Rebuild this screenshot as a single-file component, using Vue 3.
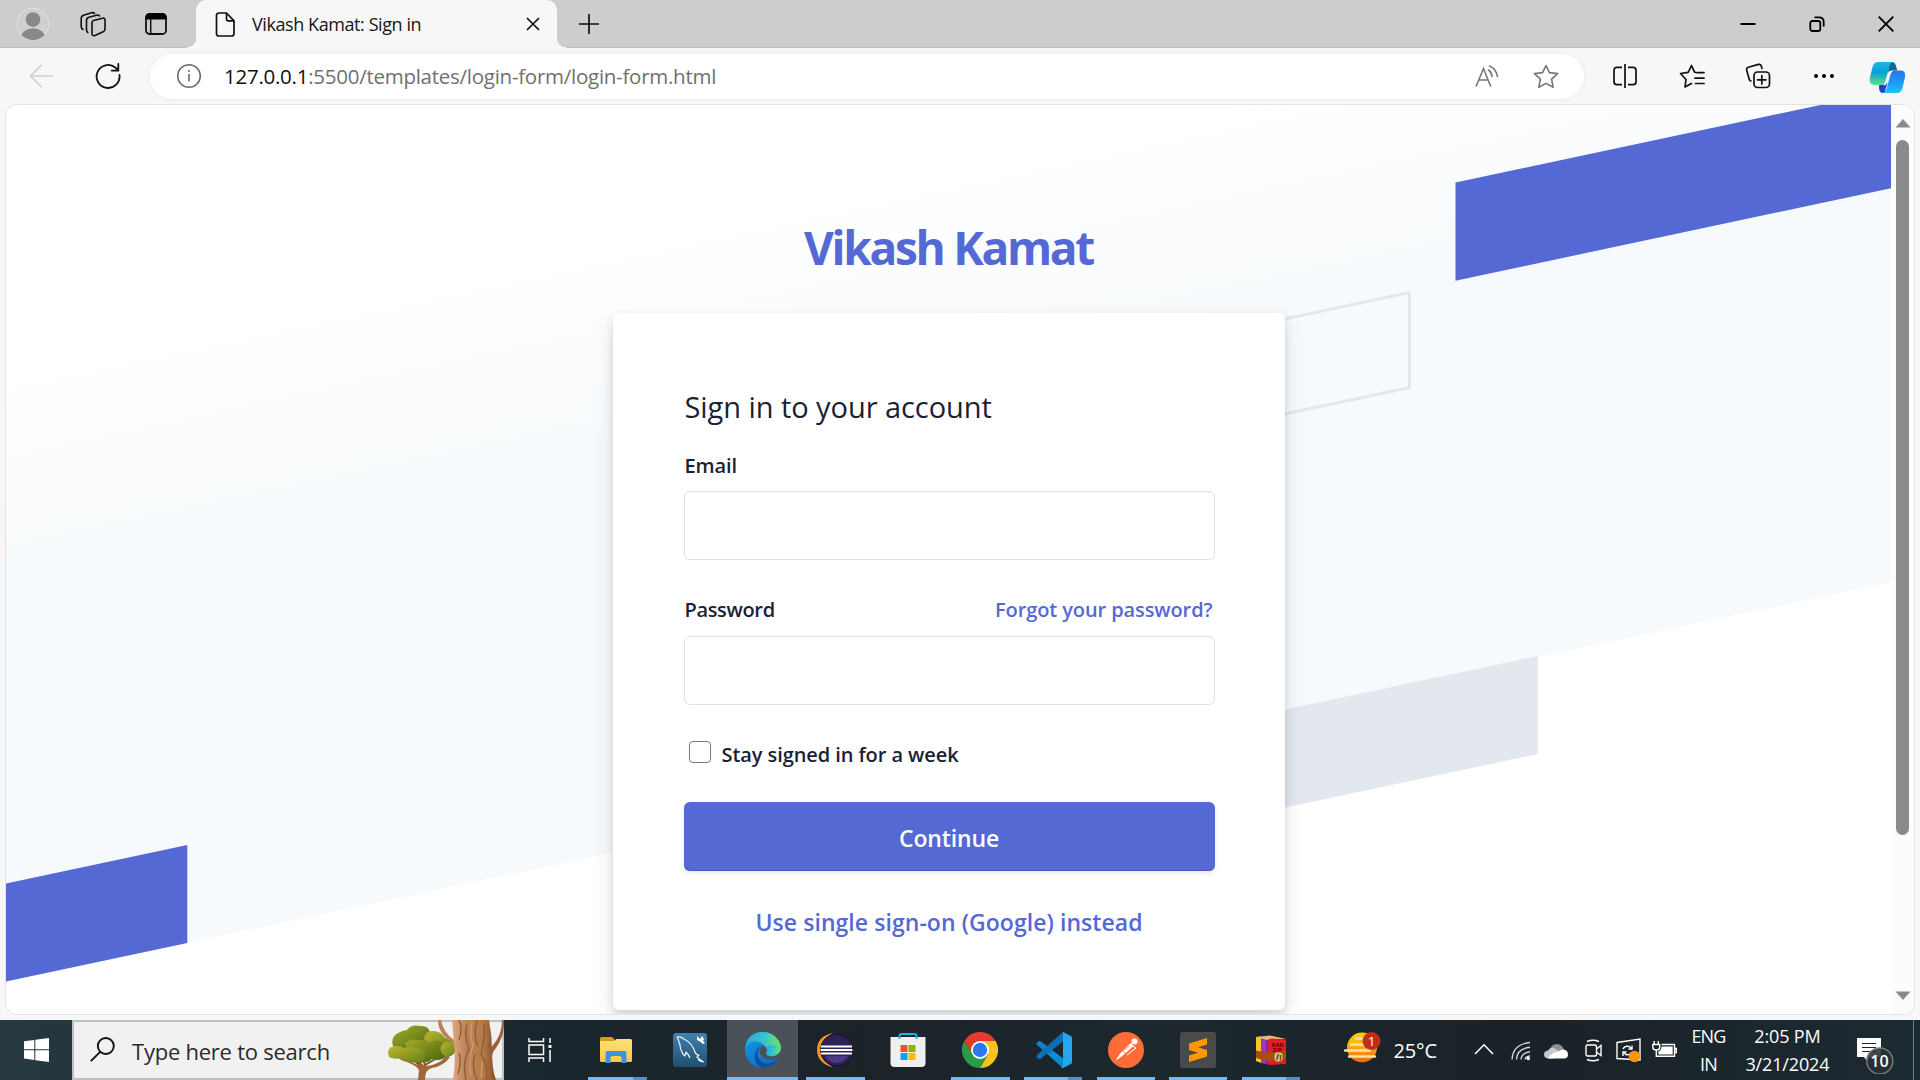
<script setup>
const apps = [
  { id: 'explorer', main: 45, extra: 14 },
  { id: 'mysql' },
  { id: 'edge', main: 71, active: true },
  { id: 'eclipse', main: 59 },
  { id: 'store' },
  { id: 'chrome', main: 59 },
  { id: 'vscode', main: 44, extra: 14 },
  { id: 'postman', main: 58 },
  { id: 'sublime', main: 58 },
  { id: 'winrar', main: 44, extra: 14 },
]
</script>

<template>
  <div class="screen">
    <!-- Tab strip -->
    <header class="tabs">
      <svg class="avatar" width="34" height="34" viewBox="0 0 34 34">
        <circle cx="17" cy="17" r="16" fill="#d2d0ce" stroke="#e4e2de" />
        <clipPath id="av"><circle cx="17" cy="17" r="16" /></clipPath>
        <g fill="#8a8886" clip-path="url(#av)">
          <ellipse cx="17" cy="12.600" rx="7.300" ry="7.400" />
          <ellipse cx="17" cy="31" rx="12.200" ry="9.700" />
        </g>
      </svg>
      <svg class="workspaces" width="26" height="26" viewBox="0 0 26 26" fill="none" stroke="#111" stroke-width="1.600" stroke-linejoin="round" stroke-linecap="round">
        <path d="M13.500 9.500 22.500 7.200Q25 6.700 25 9V18Q25 20 23.200 20.800L15 24.500Q12 25.400 12 22.500V12Q12 10 13.500 9.500Z" />
        <path d="M7.800 21.500Q6.500 20.500 6.500 18.800V9.500Q6.500 7 9 6.300L16.500 4.200Q18.500 3.700 19.500 5" />
        <path d="M3 18.500Q1.200 17.600 1.200 15.500V7.500Q1.200 5 3.500 4.200L11.500 1.800Q13.500 1.300 14.500 2.500" />
      </svg>
      <svg class="tabactions" width="22" height="22" viewBox="0 0 22 22">
        <rect x="1" y="1" width="20" height="20" rx="3.500" fill="none" stroke="#111" stroke-width="1.800" />
        <path d="M.500 6.500V4Q.500.500 4 .500H18Q21.500.500 21.500 4V6.500Z" fill="#000" />
        <path d="M5.700 6V21" stroke="#111" stroke-width="1.500" />
      </svg>
      <div class="tab">
        <i class="flare left"></i><i class="flare right"></i>
        <svg width="20" height="25" viewBox="0 0 20 25" fill="none" stroke="#111" stroke-width="1.700" stroke-linejoin="round">
          <path d="M4 1H11.500L19 8.800V21.500Q19 24 16.500 24H4Q1.500 24 1.500 21.500V3.500Q1.500 1 4 1Z" />
          <path d="M11.500 1V7Q11.500 8.800 13.300 8.800H19" />
        </svg>
        <span class="tabtitle">Vikash Kamat: Sign in</span>
        <svg class="tabclose" width="14" height="14" viewBox="0 0 14 14" stroke="#111" stroke-width="1.700"><path d="M1 1 13 13M13 1 1 13" /></svg>
      </div>
      <svg class="newtab" width="22" height="22" viewBox="0 0 22 22" stroke="#111" stroke-width="1.700"><path d="M11 1V21M1 11H21" /></svg>
      <div class="controls">
        <svg width="16" height="16" viewBox="0 0 16 16"><path d="M.500 8H15.500" stroke="#000" stroke-width="2" /></svg>
        <svg width="16" height="16" viewBox="0 0 16 16" fill="none" stroke="#000" stroke-width="1.800">
          <rect x="1.300" y="5" width="10" height="10" rx="2" /><path d="M5.500 1.400H10Q14.700 1.400 14.700 6V10.500" />
        </svg>
        <svg width="16" height="16" viewBox="0 0 16 16" stroke="#000" stroke-width="1.900"><path d="M.700.700 15.300 15.300M15.300.700.700 15.300" /></svg>
      </div>
    </header>

    <!-- Toolbar -->
    <nav class="toolbar">
      <svg class="back" width="25" height="24" viewBox="0 0 25 24" fill="none" stroke="#cfcfcf" stroke-width="1.600"><path d="M12.500 1 1.500 12 12.500 23M1.500 12H24" /></svg>
      <svg class="reload" width="26" height="26" viewBox="0 0 26 26" fill="none" stroke="#111" stroke-width="1.800" stroke-linecap="round"><path d="M24.500 12A11.500 11.500 0 1 1 20.500 4.700L23 7.200M23.300 1V7.600H16.700" /></svg>
      <div class="address">
        <svg width="26" height="26" viewBox="0 0 26 26" fill="none" stroke="#6e6e6e" stroke-width="1.600"><circle cx="13" cy="13" r="11.300" /><path d="M13 11V18.500M13 7V9" /></svg>
        <span class="url"><b>127.0.0.1</b>:5500/templates/login-form/login-form.html</span>
        <svg class="aloud" width="24" height="22" viewBox="0 0 24 22" fill="none" stroke="#777" stroke-width="1.600" stroke-linecap="round">
          <path d="M1.200 21 8.500 3.500 15.500 21M3.700 15H13.200M13.500 5Q16.500 7 17 11.500M14.500 1Q21 3.500 22.500 11.500" />
        </svg>
        <svg class="star" width="26" height="25" viewBox="0 0 26 25" fill="none" stroke="#777" stroke-width="1.600" stroke-linejoin="round"><path d="M13 1.500 16.400 8.600 24.600 9.600 18.600 15.200 20.200 23.300 13 19.400 5.800 23.300 7.400 15.200 1.400 9.600 9.600 8.600Z" /></svg>
      </div>
      <svg class="split" width="24" height="24" viewBox="0 0 24 24" fill="none" stroke="#111" stroke-width="1.700"><path d="M12 0V24M9 3.300H4Q1 3.300 1 6.300V17.700Q1 20.700 4 20.700H9M15 3.300H20Q23 3.300 23 6.300V17.700Q23 20.700 20 20.700H15" /></svg>
      <svg class="favs" width="26" height="25" viewBox="0 0 26 25" fill="none" stroke="#111" stroke-width="1.700" stroke-linejoin="round" stroke-linecap="round"><path d="M17 8.500 15.500 8.200 12.500 1.500 9.200 8.300 1.500 9.500 7 15.500 6 23 12.500 19.500M18.500 8.700H25M16 14.200H25M16.500 19.500H25" /></svg>
      <svg class="collect" width="26" height="26" viewBox="0 0 26 26" fill="none" stroke="#111" stroke-width="1.700" stroke-linecap="round">
        <rect x="9" y="9" width="15.500" height="15.500" rx="3.500" /><path d="M16.800 12.500V21M12.500 16.800H21M17 5.500 16.300 3Q15.600.900 13.400 1.400L3.400 4.300Q1.200 5 1.700 7.200L4.200 16.300Q4.700 18 6 18" />
      </svg>
      <svg class="more" width="22" height="6" viewBox="0 0 22 6"><circle cx="3" cy="3" r="2" /><circle cx="11" cy="3" r="2" /><circle cx="19" cy="3" r="2" /></svg>
      <svg class="copilot" width="37" height="33" viewBox="0 0 37 33">
        <defs>
          <linearGradient id="cp1" x1="0" y1="0" x2="0" y2="1"><stop offset="0" stop-color="#18b8e8" /><stop offset=".45" stop-color="#0a9fd8" /><stop offset="1" stop-color="#5ee28c" /></linearGradient>
          <linearGradient id="cp2" x1="0" y1="0" x2="0" y2="1"><stop offset="0" stop-color="#2a74e0" /><stop offset=".6" stop-color="#1aa0f8" /><stop offset="1" stop-color="#17c8f4" /></linearGradient>
        </defs>
        <path d="M20 1H23Q26 1 27 5L28.300 9.500H23Q20 9.500 19 13Z" fill="#0a6a94" />
        <path d="M10 23.500H15.500Q18 23.500 19 20L15.500 32H14Q11 32 10.200 28.500Z" fill="#1745cc" />
        <path d="M9 1H24Q21.500 1.500 20.500 5L16.500 20Q15.500 24 12 24H5Q0 24 .800 17L3.500 6Q5 1 9 1Z" fill="url(#cp1)" />
        <path d="M28 32H13.500Q16.500 31.500 17.500 28L21.500 13.500Q22.700 9.500 26 9.500H32Q37 9.500 36 16L33.500 27Q32 32 28 32Z" fill="url(#cp2)" />
        <path d="M20 10.500H22.500Q20.500 11.500 19.800 14L17 23Q16.300 24.500 14.500 24.500 16.500 22.500 17 20Z" fill="#fff" />
      </svg>
    </nav>

    <!-- Page -->
    <div class="frame">
      <div class="page">
        <svg class="backdrop" width="1885" height="909" viewBox="6 105 1885 909">
          <defs>
            <linearGradient id="bg" gradientUnits="userSpaceOnUse" x1="1270" y1="100" x2="1311.300" y2="294"><stop offset="0" stop-color="#fff" /><stop offset="1" stop-color="#f7fafc" /></linearGradient>
          </defs>
          <path d="M6 105H1891V582L6 981Z" fill="url(#bg)" />
          <path d="M1455.500 182.500 1891 90V188.300L1455.500 280.700Z" fill="#5469d4" />
          <path d="M1200 337 1409.500 292.500V387.500L1200 432Z" fill="none" stroke="#e3e8ee" stroke-width="3" />
          <path d="M1200 727.700 1538 656V754L1200 825.700Z" fill="#e3e8ee" />
          <path d="M6 883.500 187.300 845V943L6 981.500Z" fill="#5469d4" />
        </svg>
        <main class="content">
          <h1>Vikash Kamat</h1>
          <form class="card" @submit.prevent>
            <h2>Sign in to your account</h2>
            <div class="row first"><label for="email">Email</label></div>
            <input id="email" class="field" type="email" />
            <div class="row second"><label for="pw">Password</label><a class="forgot">Forgot your password?</a></div>
            <input id="pw" class="field" type="password" />
            <label class="stay"><span class="box"></span>Stay signed in for a week</label>
            <button class="go" type="submit">Continue</button>
            <a class="sso">Use single sign-on (Google) instead</a>
          </form>
        </main>
      </div>
      <div class="scroll">
        <svg width="16" height="9" viewBox="0 0 16 9"><path d="M8 0 15.500 8.500H.500Z" fill="#8a8a8a" /></svg>
        <div class="thumb"></div>
        <svg class="down" width="16" height="9" viewBox="0 0 16 9"><path d="M8 9 15.500.500H.500Z" fill="#8a8a8a" /></svg>
      </div>
    </div>

    <!-- Taskbar -->
    <footer class="taskbar">
      <div class="start">
        <svg width="25" height="24" viewBox="0 0 25 24" fill="#fff"><path d="M0 3.300 10.300 1.900V11.300H0ZM11.300 1.700 25 0V11.300H11.300ZM0 12.300H10.300V22L0 20.600ZM11.300 12.300H25V24L11.300 22.200Z" /></svg>
      </div>
      <div class="search">
        <svg class="mag" width="25" height="25" viewBox="0 0 25 25" fill="none" stroke="#111" stroke-width="1.900"><circle cx="15.800" cy="9" r="8" /><path d="M10.200 14.800.800 24.200" /></svg>
        <span>Type here to search</span>
        <svg class="tree" width="122" height="60" viewBox="0 0 122 60">
          <defs>
            <linearGradient id="tr" x1="0" y1="0" x2="1" y2="0"><stop offset="0" stop-color="#e0aa82" /><stop offset=".3" stop-color="#bd8458" /><stop offset=".7" stop-color="#b57a48" /><stop offset="1" stop-color="#845028" /></linearGradient>
            <linearGradient id="lf" x1="0" y1="0" x2="1" y2="1"><stop offset="0" stop-color="#a3ac28" /><stop offset=".5" stop-color="#71851a" /><stop offset="1" stop-color="#3f6010" /></linearGradient>
            <linearGradient id="lf2" x1="0" y1="0" x2="1" y2="1"><stop offset="0" stop-color="#bcb730" /><stop offset="1" stop-color="#668018" /></linearGradient>
          </defs>
          <path d="M31 60 32 50Q30 46 20 42 12 40 10 36L14 38Q23 41 31 45L26 40 34 43 38 46Q46 46 54 41L60 35 63 37Q57 46 45 48 38 49 38 60Z" fill="#a0663a" />
          <path d="M22 38 32 44 36 39 38 45 50 38" fill="none" stroke="#87512e" stroke-width="2" />
          <path d="M6 26Q3 17 11 13 17 10 20 10 24 4 33 6 41 5 43 12L51 20 45 34 15 34Z" fill="url(#lf)" />
          <path d="M37 19Q38 10 47 11 55 12 58 18 68 20 64 28L48 31Z" fill="url(#lf2)" />
          <path d="M18 24Q22 18 31 20 39 20 43 22 50 19 57 22 65 27 59 36 54 42 45 39 39 45 30 41Z" fill="url(#lf)" />
          <path d="M1 32Q2 26 9 26 14 26 17 28 23 25 29 28 36 28 38 34 39 42 28 42 21 44 14 38 7 40 2 37Z" fill="url(#lf2)" />
          <circle cx="61" cy="29" r="7.500" fill="url(#lf2)" />
          <path d="M51 0H54Q56 12 67 20 72 22 72 33 66 22 58 17 51 10 51 0Z" fill="#b98259" />
          <path d="M115 0H117Q118 15 109 28 103 35 103 47L97 42Q99 34 106 25 115 15 115 0Z" fill="#9c633a" />
          <path d="M65 0H102Q105 15 105 30 105 50 109 60H66Q69 40 67 24Z" fill="url(#tr)" />
          <path d="M72 0Q76 9 72 20M80 5Q77 15 82 29 75 42 79 60M90 0Q86 16 91 27M97 3Q98 17 94 34 102 47 99 60M72 33Q75 42 71 54M88 34Q84 47 90 60M104 17Q100 26 105 35" fill="none" stroke="#8f5d38" stroke-width="1.400" />
          <path d="M85 2Q82 15 86 25 81 40 84 56M69 3Q71 16 69 28M95 42 94 58" fill="none" stroke="#d59c6c" stroke-width="1.300" />
        </svg>
      </div>
      <div class="taskview">
        <svg width="25" height="24" viewBox="0 0 25 24" fill="none" stroke="#fff" stroke-width="1.500"><path d="M1 0V3.500H15.500V0M1 24V20H15.500V24M22 0V5M22 12V24" /><rect x="1" y="7" width="14.500" height="9.500" /><rect x="20.500" y="7" width="3" height="3" fill="#fff" stroke="none" /></svg>
      </div>
      <div class="apps">
        <div v-for="a in apps" :key="a.id" class="app" :class="{ active: a.active }">
          <svg v-if="a.id === 'explorer'" width="36" height="36" viewBox="0 0 36 36">
            <defs><linearGradient id="fo" x1="0" y1="0" x2="0" y2="1"><stop offset="0" stop-color="#ffe07c" /><stop offset="1" stop-color="#fbc840" /></linearGradient></defs>
            <path d="M1 6.500Q1 5 2.500 5H12.500Q14 5 15 7L16 9H1Z" fill="#dc9e08" />
            <path d="M1 9H15L17.500 7H31.500Q33 7 33 8.500V28.500Q33 30 31.500 30H2.500Q1 30 1 28.500Z" fill="url(#fo)" />
            <path d="M6.500 31V21Q6.500 19 8.500 19H25.500Q27.500 19 27.500 21V31H22.500V26Q22.500 24 20.500 24H13.500Q11.500 24 11.500 26V31Z" fill="#3b93dc" />
          </svg>
          <svg v-else-if="a.id === 'mysql'" width="36" height="36" viewBox="0 0 36 36">
            <defs><linearGradient id="my" x1="0" y1="0" x2="0" y2="1"><stop offset="0" stop-color="#4380ac" /><stop offset="1" stop-color="#1e5070" /></linearGradient></defs>
            <rect x="1" y="1" width="34" height="34" rx="3" fill="url(#my)" />
            <path d="M5 5Q9 4.500 12 7 20 11 23 20 24 23 27 23L25 25Q28 28 31.500 30 28 29.500 26 27.500M5 5Q7 9 8 13 8 17 10 20 11 23 13 24L14 20Q17 23 18 26" fill="none" stroke="#e8f2f8" stroke-width="1.200" stroke-linejoin="round" />
            <path d="M25 4 28 7 30 4 32 7 31 9 33 11 31 12 28 9.500 25 8Z" fill="#fff" />
          </svg>
          <svg v-else-if="a.id === 'edge'" width="36" height="36" viewBox="0 0 36 36">
            <defs>
              <linearGradient id="e1" x1="0" y1=".4" x2="1" y2=".5"><stop offset="0" stop-color="#25a8d8" /><stop offset=".5" stop-color="#35c1d6" /><stop offset="1" stop-color="#70e852" /></linearGradient>
              <linearGradient id="e2" x1="0" y1="0" x2=".5" y2="1"><stop offset="0" stop-color="#1b9de2" /><stop offset="1" stop-color="#0a6fc6" /></linearGradient>
            </defs>
            <circle cx="18" cy="18" r="18" fill="url(#e2)" />
            <path d="M0 17Q2 0 18 0 28 0 34 9 38 18 33 22 29 25 24 24 20 23 21.500 20.500 23 17 20 14 16 9 9 9.500 2 11 0 17Z" fill="url(#e1)" />
            <path d="M16 14Q10 20 14 27 19 36 33 27.500 27 36 18 36 9 33 10 23 11 16 16 14Z" fill="#0d4f9c" />
            <path d="M18 13.500Q13 17 15.500 22.500 19 29.500 33 27 36 26 36 20L34 21Q29 25 24 24 20 23 21.500 20.500 23 16 18 13.500Z" fill="#4a5158" />
            <path d="M33 22Q29 25 24 24 20 23 21.500 20.500 23 17 21 14L35 12Q37 18 33 22Z" fill="url(#e1)" />
          </svg>
          <svg v-else-if="a.id === 'eclipse'" width="36" height="36" viewBox="0 0 36 36">
            <path d="M16 1Q0 4 0 18 0 31 16 35.500 5 29 5 18 5 7 16 1Z" fill="#f7941e" />
            <circle cx="19.500" cy="18" r="16" fill="#2c2255" stroke="#15112c" />
            <path d="M8 24H31Q27 31 19.500 31 12 31 8 24Z" fill="#4a3a86" />
            <path d="M4 14.500H35M3.500 18H35.500M4 21.500H35" stroke="#fff" stroke-width="2" />
          </svg>
          <svg v-else-if="a.id === 'store'" width="36" height="36" viewBox="0 0 36 36">
            <path d="M9.500 7V4Q9.500 2 11.500 2H24.500Q26.500 2 26.500 4V7" fill="none" stroke="#1db1f0" stroke-width="2" />
            <path d="M.500 5H35.500V31Q35.500 35 31.500 35H4.500Q.500 35 .500 31Z" fill="#f0f0f0" />
            <path d="M9.500 5V7M26.500 5V7" stroke="#1db1f0" stroke-width="2" />
            <path d="M10.500 13H17.500V20H10.500Z" fill="#f25022" /><path d="M18.500 13H25.500V20H18.500Z" fill="#7fba00" /><path d="M10.500 21H17.500V28H10.500Z" fill="#00a4ef" /><path d="M18.500 21H25.500V28H18.500Z" fill="#ffb900" />
          </svg>
          <svg v-else-if="a.id === 'chrome'" width="36" height="36" viewBox="0 0 36 36">
            <path d="M18 18 2.400 9A18 18 0 0 1 33.600 9Z" fill="#e33b2e" />
            <path d="M18 9H33.600A18 18 0 0 1 18 36L25.800 22.500Z" fill="#fcc21b" />
            <path d="M10.200 22.500 2.400 9A18 18 0 0 0 18 36L25.800 22.500 18 27Z" fill="#2c9a47" />
            <path d="M2.400 9 10.200 22.500 18 9Z" fill="#e33b2e" />
            <circle cx="18" cy="18" r="9" fill="#fff" /><circle cx="18" cy="18" r="7.200" fill="#2a78ee" />
          </svg>
          <svg v-else-if="a.id === 'vscode'" class="nudge" width="36" height="36" viewBox="0 0 36 36">
            <path d="M27 36 1 13Q0 12 .500 11L2.500 9.300Q3.500 8.500 5 9.500L27 26.500Z" fill="#1080c8" />
            <path d="M27 0 1 23Q0 24 .500 25L2.500 26.700Q3.500 27.500 5 26.500L27 9.500Z" fill="#0a6fb4" />
            <path d="M27 36 13 23.500 17.500 19.200 27 26.500Z" fill="#0b8ad6" />
            <path d="M27 0 35 4Q36 4.500 36 6V30Q36 31.500 35 32L27 36Q26 36 25.500 35.500L27 33Z" fill="#27a5ee" />
          </svg>
          <svg v-else-if="a.id === 'postman'" width="36" height="36" viewBox="0 0 36 36">
            <circle cx="18" cy="18" r="18" fill="#ff6c37" />
            <circle cx="26.500" cy="9.500" r="3" fill="#fff" />
            <path d="M23 11 25.500 14 18 21 9 28 8 27.500 14 19Z" fill="#fff" />
            <path d="M15 18 17 21M13 20 21 14M16 23 24 16M26 13 28 16" stroke="#ff6c37" stroke-width=".800" /><path d="M25 14 28 16 19 23" stroke="#fff" fill="none" />
          </svg>
          <svg v-else-if="a.id === 'sublime'" width="36" height="36" viewBox="0 0 36 36">
            <rect width="36" height="36" rx="2.500" fill="#4a4a4a" />
            <path d="M9 11.500 27 6V12.500L18 15.300 27 18V24.500L9 30V23.500L18 20.700 9 18Z" fill="#ff9800" />
          </svg>
          <svg v-else width="36" height="36" viewBox="0 0 36 36">
            <path d="M3 5 8 4.500V31L3 29Z" fill="#f4c81e" /><path d="M8 5 13 4.500V32L8 31Z" fill="#a035c8" /><path d="M13 6 18 5V33L13 32Z" fill="#6a28b0" />
            <path d="M3 5 17 3.500 33 7 14 8Z" fill="#e8b878" />
            <path d="M14 8 18 6.500 33 7.500V32L15 33Z" fill="#e01d20" />
            <text x="18.500" y="14.500" class="rar">RAR</text><text x="19.500" y="20" class="rar">ZIP</text>
            <path d="M3 18.500 14 20.500 33 19V27L14 29 3 26Z" fill="#a54e10" />
            <rect x="21.500" y="20.500" width="8" height="9" rx="3" fill="#d8c090" /><path d="M23.500 28 25.500 22M27.500 28.500V23" stroke="#6d4a20" stroke-width="1.500" />
          </svg>
          <div v-if="a.main" class="bar"><i :style="{ width: a.main + 'px' }"></i><i v-if="a.extra" class="dim" :style="{ width: a.extra + 'px' }"></i></div>
        </div>
      </div>
      <div class="tray">
        <svg class="weather" width="37" height="31" viewBox="0 0 37 31">
          <defs><linearGradient id="sun" x1="0" y1="0" x2="0" y2="1"><stop offset="0" stop-color="#ffce08" /><stop offset=".5" stop-color="#fba815" /><stop offset="1" stop-color="#ef6410" /></linearGradient></defs>
          <circle cx="18" cy="15.500" r="15" fill="url(#sun)" />
          <path d="M12 6.500H23M7 12.500H22M1 18.500H26M5 24.500H31M19 6.500H20" stroke="#fbe3a8" stroke-width="2.400" stroke-linecap="round" />
          <circle cx="27.500" cy="9" r="9" fill="#c42b1c" />
          <text x="27.500" y="14" text-anchor="middle" fill="#fff" font-size="13.500">1</text>
        </svg>
        <span class="temp">25°C</span>
        <svg class="chev" width="20" height="12" viewBox="0 0 20 12" fill="none" stroke="#fff" stroke-width="1.600"><path d="M1 11 10 1.800 19 11" /></svg>
        <svg class="wifi" width="20" height="20" viewBox="0 0 20 20" fill="none" stroke="#d5d8da" stroke-width="1.400"><path d="M1 18.500Q2 3 19 1.500M5.500 18.500Q6 7.500 19 6.200M10 18.500Q10.500 11.800 19 10.700M14 18.500Q14.500 15.500 19 15" /><circle cx="17.300" cy="17.500" r="1.700" fill="#fff" stroke="none" /></svg>
        <svg class="cloud" width="24" height="16" viewBox="0 0 24 16"><path d="M6 9Q6 1 13 1 18 1 20 7L10 13Z" fill="#8d9194" /><path d="M4 15.500Q0 15 0 11.500 0 8 4 7.500 6 4 10 5L18 10 10 15.500Z" fill="#c8cbcc" /><path d="M4 15.500Q7 10 12 9.500L18 6.500Q24 6.500 24 11.500 24 15.500 20 15.500Z" fill="#fff" /></svg>
        <svg class="cam" width="18" height="23" viewBox="0 0 18 23" fill="none" stroke="#fff" stroke-width="1.400"><rect x="1" y="6" width="10.500" height="11" rx="1.500" /><path d="M11.500 10 16 6.500V16.500L11.500 13M2 2.500Q8 0 14 2.500M2 20.500Q8 23 14 20.500" /></svg>
        <svg class="upd" width="25" height="25" viewBox="0 0 25 25" fill="none" stroke="#fff" stroke-width="1.400"><path d="M1 4.500 24 1V22L1 20.500ZM7 11Q9 7.500 13 8.500L15.500 10.500M16 7.500V11H12.500M16 14Q14 17.500 10 16.500L7.500 14.500M7 18V14H10.500" /><circle cx="18.500" cy="18.500" r="5.800" fill="#ff9500" stroke="none" /></svg>
        <svg class="bat" width="25" height="18" viewBox="0 0 25 18" fill="none" stroke="#fff" stroke-width="1.400"><path d="M2.200 0V3M6.300 0V3M.800 3.500H7.700V6.500Q7.700 9 4.300 9 .800 9 .800 6.500ZM4.300 9V15.300H22.500V3.500H9.500M22.500 7.500H24.300V11.500H22.500" /><path d="M9.500 5.500H20.700V13.500H6.300V10.500Q9.500 9.500 9.500 5.500Z" fill="#fff" stroke="none" /></svg>
        <div class="lang"><span>ENG</span><span>IN</span></div>
        <div class="clock"><span>2:05 PM</span><span>3/21/2024</span></div>
        <svg class="note" width="37" height="36" viewBox="0 0 37 36">
          <path d="M0 0H24V19H13L10 23 7 19H0Z" fill="#fff" /><path d="M5 5.500H19M5 9.500H19M5 13.500H19" stroke="#1c262c" stroke-width="1.200" />
          <circle cx="22.800" cy="23" r="13" fill="#2a3034" fill-opacity=".88" stroke="#74797c" stroke-width="1.500" />
          <text x="22.500" y="29" text-anchor="middle" fill="#fff" font-size="16" font-weight="600">10</text>
        </svg>
        <i class="peek"></i>
      </div>
    </footer>
  </div>
</template>

<style>
body { margin: 0; overflow: hidden; }
</style>

<style scoped>
* { box-sizing: border-box; }
svg { display: block; flex: none; }
.screen { width: 1920px; height: 1080px; display: flex; flex-direction: column; background: #f7f7f7; font-family: "Open Sans", "Noto Sans", sans-serif; overflow: hidden; white-space: nowrap; }

.tabs { height: 48px; flex: none; display: flex; align-items: center; background: #cdcdcd; box-shadow: inset 0 -1px #c0c0c0; }
.avatar { margin-left: 16px; }
.workspaces { margin-left: 30px; }
.tabactions { margin-left: 39px; }
.tab { position: relative; width: 361px; height: 48px; margin-left: 29px; padding-left: 19px; display: flex; align-items: center; background: #f7f7f7; border-radius: 10px 10px 0 0; }
.flare { position: absolute; bottom: 0; width: 9px; height: 10px; }
.flare.left { left: -9px; background: radial-gradient(circle at 0 0, transparent 9px, #f7f7f7 9.500px); }
.flare.right { right: -9px; background: radial-gradient(circle at 100% 0, transparent 9px, #f7f7f7 9.500px); }
.tabtitle { margin-left: 17px; width: 274px; margin-top: -1px; font-size: 18px; line-height: 24px; letter-spacing: -.42px; color: #161616; }
.newtab { margin-left: 21px; margin-top: -1px; }
.controls { display: flex; gap: 53px; margin-left: auto; margin-right: 26px; margin-top: -1px; }

.toolbar { height: 56px; flex: none; display: flex; align-items: center; }
.back { margin-left: 29px; }
.reload { margin-left: 41px; }
.address { width: 1434px; height: 45px; margin-left: 29px; padding-left: 26px; border-radius: 23px; display: flex; align-items: center; background: #fff; box-shadow: 0 0 6px rgba(0, 0, 0, .05); }
.url { margin-left: 22px; font-size: 20.500px; line-height: 28px; letter-spacing: -.26px; color: #6f6f6f; }
.url b { font-weight: 400; color: #111; }
.aloud { margin-left: auto; }
.star { margin: 0 25px 0 34px; }
.split { margin-left: 29px; }
.favs { margin-left: 42px; }
.collect { margin-left: 40px; }
.more { margin-left: 42px; }
.copilot { margin-left: 34px; margin-top: 2px; }

.frame { height: 911px; flex: none; margin: 0 5px; display: flex; border: 1px solid #e3e3e3; border-radius: 12px; background: #fff; overflow: hidden; }
.page { position: relative; width: 1885px; height: 909px; overflow: hidden; }
.backdrop { position: absolute; left: 0; top: 0; }
.content { position: relative; display: flex; flex-direction: column; align-items: center; padding-top: 110px; }
h1 { margin: 0; font-size: 46px; line-height: 64px; font-weight: 700; letter-spacing: -2.300px; color: #5469d4; }
.card { width: 672px; height: 697px; margin-top: 34px; padding: 74px 70px 0 71px; display: flex; flex-direction: column; background: #fff; border-radius: 6px; box-shadow: 0 11px 22px rgba(60, 66, 87, .12), 0 4px 9px rgba(0, 0, 0, .12); }
h2 { margin: 0 0 0 1px; font-size: 29px; line-height: 40px; font-weight: 400; letter-spacing: -.06px; color: #1a1f36; }
.row { display: flex; justify-content: space-between; padding: 0 2px 0 1px; font-size: 20px; line-height: 28px; font-weight: 600; letter-spacing: -.1px; color: #1a1f36; }
.row.first { margin-top: 25px; }
.row.second { margin-top: 36px; }
.row.second label { letter-spacing: -.34px; }
.forgot { color: #5469d4; }
.field { width: 100%; height: 69px; margin: 11px 0 0; border: 1.500px solid #dfe0e4; border-radius: 6px; background: #fff; outline: none; }
.row.second + .field { margin-top: 12px; }
.stay { display: flex; align-items: center; height: 28px; margin-top: 35px; padding-left: 5px; font-size: 20px; font-weight: 600; letter-spacing: -.08px; color: #1a1f36; }
.box { width: 22px; height: 22px; margin: -4px 11px 0 0; border: 1.500px solid #767676; border-radius: 4px; background: #fff; }
.go { width: 100%; height: 69px; margin-top: 34px; padding: 2px 0 0; border: 0; border-radius: 6px; background: #5469d4; box-shadow: inset 0 -1px #4a5cc4, 0 2px 5px rgba(60, 66, 87, .12); color: #fff; font: 600 23px "Open Sans", sans-serif; letter-spacing: -.14px; }
.sso { margin-top: 35px; text-align: center; font-size: 23px; line-height: 32px; font-weight: 600; letter-spacing: .06px; color: #5469d4; }
.scroll { flex: 1; display: flex; flex-direction: column; align-items: center; padding-top: 14px; background: #fcfcfc; }
.thumb { width: 13px; height: 695px; margin-top: 12px; border-radius: 7px; background: #8a8a8a; }
.down { margin-top: auto; margin-bottom: 14px; }

.taskbar { height: 60px; flex: none; margin-top: auto; display: flex; background: linear-gradient(90deg, #263840, #1a272e 27%, #1b2329 45%, #1c272e 60%, #1a2228 80%, #1c2a31); color: #fff; }
.start { width: 72px; display: flex; align-items: center; justify-content: center; }
.search { position: relative; width: 432px; height: 60px; border: 2px solid #c0c0c0; background: #f1f1f1; display: flex; align-items: center; padding-left: 16px; color: #2b2b2b; font-size: 22px; letter-spacing: -.24px; }
.search span { margin: 1px 0 0 17px; line-height: 30px; }
.tree { position: absolute; left: 313px; top: -2px; clip-path: inset(0 5px 0 0); }
.mag { margin-top: -1px; }
.taskview { width: 72px; display: flex; align-items: center; justify-content: center; }
.apps { display: flex; gap: 1.670px; margin-left: 5.700px; }
.app { position: relative; width: 71px; height: 60px; display: flex; align-items: center; justify-content: center; }
.app.active { background: #4a5158; }
.nudge { margin-left: 1px; }
.bar { position: absolute; left: 0; right: 0; bottom: 0; height: 3px; display: flex; justify-content: center; }
.bar i { height: 3px; background: #76b9ff; }
.bar .dim { background: #5a8dc4; }
.rar { font: 700 6px "Open Sans", sans-serif; fill: #5a0808; }
.tray { position: relative; display: flex; align-items: center; margin-left: 37.800px; flex: 1; }
.weather { margin-top: -6px; }
.temp { margin: 2px 0 0 12px; width: 44px; font-size: 20px; line-height: 28px; letter-spacing: -.15px; }
.chev { margin: -2px 0 0 37px; }
.wifi { margin: 2px 0 0 17px; }
.cloud { margin: 1px 0 0 13px; }
.cam { margin-left: 17px; }
.upd { margin-left: 13px; }
.bat { margin-left: 11px; margin-top: 0; }
.lang, .clock { display: flex; flex-direction: column; align-items: center; font-size: 18px; line-height: 27.500px; letter-spacing: -.3px; margin-top: 1px; }
.lang { width: 44px; margin-left: 9px; letter-spacing: -.9px; }
.clock { width: 90px; margin-left: 12px; letter-spacing: -.15px; }
.note { margin: 11px 0 0 25px; }
.peek { position: absolute; right: 6px; top: 0; width: 1px; height: 60px; background: #70797e; }
text { font-family: "Open Sans", sans-serif; }
</style>
